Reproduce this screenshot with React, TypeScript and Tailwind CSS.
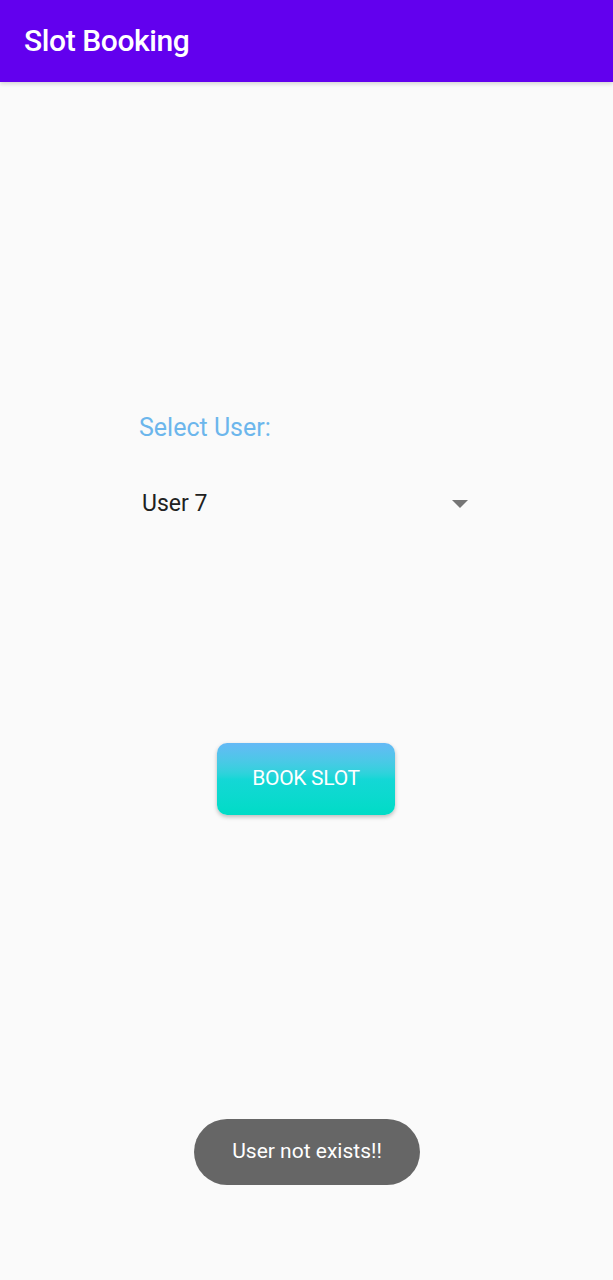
import React from 'react';

const App: React.FC = () => {
  return (
    <div className="relative w-[613px] h-[1280px] bg-[#fafafa] overflow-hidden" style={{ fontFamily: 'Roboto, "Noto Sans", sans-serif' }}>
      <header className="h-[82px] bg-[#6200ee] flex items-center px-6 shadow-[0_2px_4px_rgba(0,0,0,0.15)]">
        <h1 className="text-white text-[30px] font-medium leading-none tracking-[-0.4px] pb-[1px]">Slot Booking</h1>
      </header>

      <main className="flex flex-col">
        <div className="pl-[139px] pr-[144px] pt-[330px]">
          <p className="text-[#6cb6ec] text-[25px] leading-[32px] tracking-[0px]">Select User:</p>
          <div className="mt-[45px] flex items-center justify-between pl-[3px]">
            <span className="text-[#212121] text-[23px] leading-[30px]">User 7</span>
            <svg width="16" height="8" viewBox="0 0 16 8" className="mr-[1px]">
              <path d="M0 0 L16 0 L8 8 Z" fill="#757575" />
            </svg>
          </div>
        </div>

        <div className="flex justify-center pt-[224px] pr-[1px]">
          <button className="w-[178px] h-[72px] rounded-[10px] bg-gradient-to-b from-[#64b9f6] via-[#14d7d6] to-[#00dcc6] text-white text-[21px] shadow-[0_2px_4px_rgba(0,0,0,0.25)] tracking-[-0.3px]">
            BOOK SLOT
          </button>
        </div>
      </main>

      <div className="absolute left-[194px] top-[1119px] w-[226px] h-[66px] rounded-full bg-[#666666] flex items-center justify-center">
        <span className="text-white text-[21px] tracking-[0px]">User not exists!!</span>
      </div>
    </div>
  );
};

export default App;
